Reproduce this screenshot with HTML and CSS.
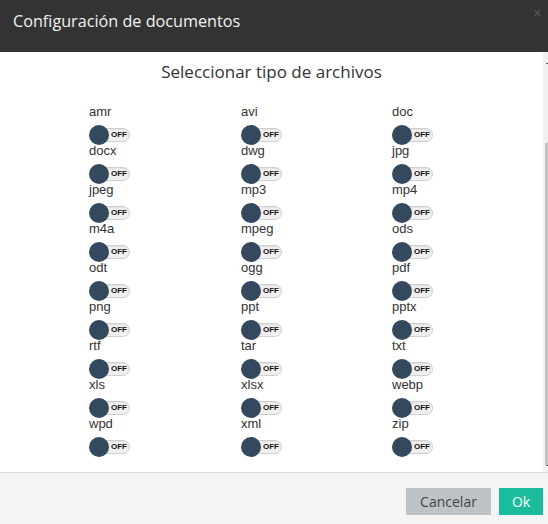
FILE: index.html
```html
<!DOCTYPE html>
<html lang="es">
<head>
<meta charset="utf-8">
<title>Configuración de documentos</title>
<link rel="stylesheet" href="styles.css">
</head>
<body>
<div class="modal">
  <div class="modal-header">
    <h1 class="modal-title">Configuración de documentos</h1>
    <span class="close">&#x2715;</span>
  </div>
  <div class="modal-body">
    <div class="content">
      <h2 class="subtitle">Seleccionar tipo de archivos</h2>
      <div class="grid">
        <div class="item"><div class="label">amr</div><div class="toggle"><span class="knob"></span><span class="off">OFF</span></div></div>
        <div class="item"><div class="label">avi</div><div class="toggle"><span class="knob"></span><span class="off">OFF</span></div></div>
        <div class="item"><div class="label">doc</div><div class="toggle"><span class="knob"></span><span class="off">OFF</span></div></div>
        <div class="item"><div class="label">docx</div><div class="toggle"><span class="knob"></span><span class="off">OFF</span></div></div>
        <div class="item"><div class="label">dwg</div><div class="toggle"><span class="knob"></span><span class="off">OFF</span></div></div>
        <div class="item"><div class="label">jpg</div><div class="toggle"><span class="knob"></span><span class="off">OFF</span></div></div>
        <div class="item"><div class="label">jpeg</div><div class="toggle"><span class="knob"></span><span class="off">OFF</span></div></div>
        <div class="item"><div class="label">mp3</div><div class="toggle"><span class="knob"></span><span class="off">OFF</span></div></div>
        <div class="item"><div class="label">mp4</div><div class="toggle"><span class="knob"></span><span class="off">OFF</span></div></div>
        <div class="item"><div class="label">m4a</div><div class="toggle"><span class="knob"></span><span class="off">OFF</span></div></div>
        <div class="item"><div class="label">mpeg</div><div class="toggle"><span class="knob"></span><span class="off">OFF</span></div></div>
        <div class="item"><div class="label">ods</div><div class="toggle"><span class="knob"></span><span class="off">OFF</span></div></div>
        <div class="item"><div class="label">odt</div><div class="toggle"><span class="knob"></span><span class="off">OFF</span></div></div>
        <div class="item"><div class="label">ogg</div><div class="toggle"><span class="knob"></span><span class="off">OFF</span></div></div>
        <div class="item"><div class="label">pdf</div><div class="toggle"><span class="knob"></span><span class="off">OFF</span></div></div>
        <div class="item"><div class="label">png</div><div class="toggle"><span class="knob"></span><span class="off">OFF</span></div></div>
        <div class="item"><div class="label">ppt</div><div class="toggle"><span class="knob"></span><span class="off">OFF</span></div></div>
        <div class="item"><div class="label">pptx</div><div class="toggle"><span class="knob"></span><span class="off">OFF</span></div></div>
        <div class="item"><div class="label">rtf</div><div class="toggle"><span class="knob"></span><span class="off">OFF</span></div></div>
        <div class="item"><div class="label">tar</div><div class="toggle"><span class="knob"></span><span class="off">OFF</span></div></div>
        <div class="item"><div class="label">txt</div><div class="toggle"><span class="knob"></span><span class="off">OFF</span></div></div>
        <div class="item"><div class="label">xls</div><div class="toggle"><span class="knob"></span><span class="off">OFF</span></div></div>
        <div class="item"><div class="label">xlsx</div><div class="toggle"><span class="knob"></span><span class="off">OFF</span></div></div>
        <div class="item"><div class="label">webp</div><div class="toggle"><span class="knob"></span><span class="off">OFF</span></div></div>
        <div class="item"><div class="label">wpd</div><div class="toggle"><span class="knob"></span><span class="off">OFF</span></div></div>
        <div class="item"><div class="label">xml</div><div class="toggle"><span class="knob"></span><span class="off">OFF</span></div></div>
        <div class="item"><div class="label">zip</div><div class="toggle"><span class="knob"></span><span class="off">OFF</span></div></div>
      </div>
    </div>
    <div class="scrollbar">
      <div class="arrow arrow-up"></div>
      <div class="thumb"></div>
      <div class="arrow arrow-down"></div>
    </div>
  </div>
  <div class="modal-footer">
    <button class="btn btn-cancel">Cancelar</button>
    <button class="btn btn-ok">Ok</button>
  </div>
</div>
</body>
</html>
```

FILE: styles.css
```css
* { box-sizing: border-box; }
html, body { margin: 0; padding: 0; }
body {
  width: 548px;
  height: 524px;
  overflow: hidden;
  background: #fff;
  font-family: "Liberation Sans", Arial, sans-serif;
}
.modal {
  display: flex;
  flex-direction: column;
  width: 548px;
  height: 524px;
}
.modal-header {
  height: 52px;
  flex: none;
  background: #333333;
  display: flex;
  align-items: flex-start;
  justify-content: space-between;
  padding: 0 6px 0 13px;
}
.modal-title {
  margin: 9px 0 0 0;
  font-family: "Open Sans", sans-serif;
  font-weight: 400;
  font-size: 16.2px;
  line-height: 24px;
  color: #f2f2f2;
  letter-spacing: 0;
}
.close {
  margin-top: 7px;
  font-size: 11px;
  color: #555;
  font-family: "DejaVu Sans", sans-serif;
}
.modal-body {
  height: 420px;
  flex: none;
  display: flex;
}
.content {
  flex: 1;
  overflow: hidden;
}
.subtitle {
  margin: 8px 0 0 0;
  text-align: center;
  font-family: "Open Sans", sans-serif;
  font-weight: 400;
  font-size: 17px;
  line-height: 24px;
  color: #333;
}
.grid {
  display: grid;
  grid-template-columns: 152px 151px 151px;
  padding-left: 89px;
  margin-top: 20px;
}
.item {
  height: 39px;
  display: flex;
  flex-direction: column;
}
.label {
  font-size: 13px;
  line-height: 15px;
  color: #333;
}
.toggle {
  margin-top: 6px;
  height: 20px;
  width: 41px;
  display: flex;
  align-items: center;
}
.knob {
  width: 20px;
  height: 20px;
  border-radius: 50%;
  background: #34495e;
  flex: none;
  position: relative;
  z-index: 1;
}
.off {
  margin-left: -17px;
  height: 14px;
  width: 38px;
  border: 1px solid #cfcfcf;
  border-radius: 8px;
  background: #efefef;
  font-size: 8px;
  font-weight: 700;
  line-height: 12px;
  color: #111;
  padding-left: 18px;
  box-shadow: inset 0 1px 1px rgba(0,0,0,0.05);
}
.scrollbar {
  width: 5px;
  flex: none;
  background: #f1f1f1;
  display: flex;
  flex-direction: column;
  align-items: flex-end;
}
.arrow {
  width: 2px;
  height: 1px;
  background: #555;
}
.arrow-up { margin-top: 11px; }
.thumb {
  width: 3px;
  background: #c1c1c1;
  margin-top: 79px;
  height: 322px;
}
.modal-footer {
  flex: 1;
  background: #f4f4f4;
  border-top: 1px solid #dddddd;
  display: flex;
  justify-content: flex-end;
  align-items: flex-start;
  gap: 8px;
  padding: 15px 5px 0 0;
}
.btn {
  height: 27px;
  border: none;
  border-radius: 0;
  font-family: "Open Sans", sans-serif;
  font-size: 14px;
  padding: 0;
  cursor: pointer;
}
.btn-cancel {
  width: 85px;
  background: #bdc3c7;
  color: #444;
}
.btn-ok {
  width: 44px;
  background: #1abc9c;
  color: #fff;
}
```
